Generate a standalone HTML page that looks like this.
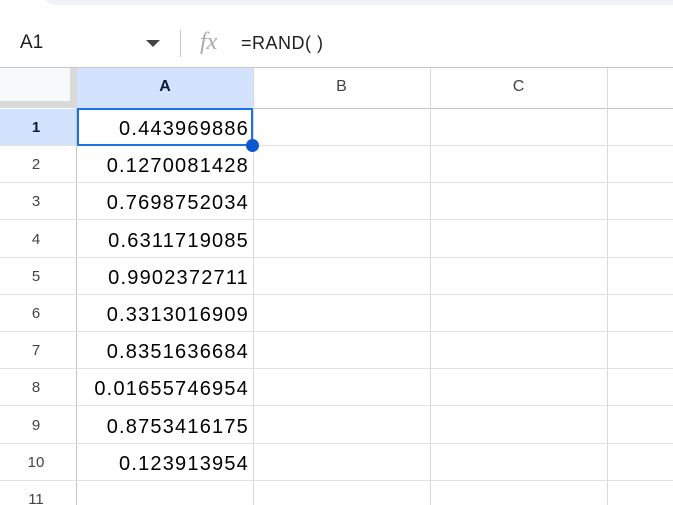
<!DOCTYPE html><html><head><style>
html,body{margin:0;width:673px;height:505px;overflow:hidden;background:#fff;font-family:"Liberation Sans",Arial,sans-serif;position:relative}
.a{position:absolute}
.n{font-size:20px;color:#000;text-align:right;width:174px;left:75px;letter-spacing:1.2px}
.r{font-size:15px;color:#444;text-align:center;width:72px;left:0}
</style></head><body>
<div class="a" style="left:40px;top:-30px;width:700px;height:35px;background:#eef2f9;border-radius:20px"></div>
<div class="a" style="left:20px;top:32px;font-size:19px;color:#1f1f1f">A1</div>
<div class="a" style="left:146px;top:40px;width:0;height:0;border-left:7px solid transparent;border-right:7px solid transparent;border-top:7px solid #444"></div>
<div class="a" style="left:180px;top:30px;width:1px;height:27px;background:#c4c7c5"></div>
<div class="a" style="left:200px;top:29px;font-family:'Liberation Serif',serif;font-style:italic;font-size:24px;color:#aaa">fx</div>
<div class="a" style="left:241px;top:33px;font-size:18px;color:#1f1f1f;letter-spacing:0.5px">=RAND( )</div>
<div class="a" style="left:0;top:67px;width:673px;height:1px;background:#c4c7c5"></div>
<div class="a" style="left:0;top:68px;width:70px;height:33px;background:#f8f9fa"></div>
<div class="a" style="left:70px;top:68px;width:7px;height:40px;background:#d9d9d9"></div>
<div class="a" style="left:0;top:101px;width:77px;height:7px;background:#d9d9d9"></div>
<div class="a" style="left:76px;top:108px;width:1px;height:397px;background:#c4c7c5"></div>
<div class="a" style="left:77px;top:68px;width:176px;height:40px;background:#d3e3fd"></div>
<div class="a" style="left:77px;top:108px;width:596px;height:1px;background:#c4c7c5"></div>
<div class="a" style="left:253px;top:68px;width:1px;height:437px;background:#d9d9d9"></div>
<div class="a" style="left:430px;top:68px;width:1px;height:437px;background:#d9d9d9"></div>
<div class="a" style="left:607px;top:68px;width:1px;height:437px;background:#d9d9d9"></div>
<div class="a" style="left:77px;top:78px;width:176px;text-align:center;font-weight:bold;font-size:16px;color:#0b1a3a">A</div>
<div class="a" style="left:253px;top:78px;width:177px;text-align:center;font-size:16px;color:#444">B</div>
<div class="a" style="left:430px;top:78px;width:177px;text-align:center;font-size:16px;color:#444">C</div>
<div class="a" style="left:0;top:109px;width:76px;height:36px;background:#d3e3fd"></div>
<div id="g"></div>
<script>
var v=["0.443969886","0.1270081428","0.7698752034","0.6311719085","0.9902372711","0.3313016909","0.8351636684","0.01655746954","0.8753416175","0.123913954",""];
var h="";for(var i=0;i<11;i++){var t=109+i*37.2;
h+='<div class="a" style="left:0;top:'+(t+36)+'px;width:673px;height:1px;background:#e1e1e1"></div>';
h+='<div class="a r" style="top:'+(t+10)+'px;'+(i==0?'font-weight:bold;color:#0b1a3a':'')+'">'+(i+1)+'</div>';
if(v[i])h+='<div class="a n" style="top:'+(t+9)+'px">'+v[i]+'</div>';}
document.getElementById("g").innerHTML=h;
</script>
<div class="a" style="left:77px;top:108px;width:172px;height:34px;border:2px solid #1a73e8"></div>
<div class="a" style="left:246px;top:139px;width:13px;height:13px;border-radius:50%;background:#0b57d0"></div>
</body></html>
